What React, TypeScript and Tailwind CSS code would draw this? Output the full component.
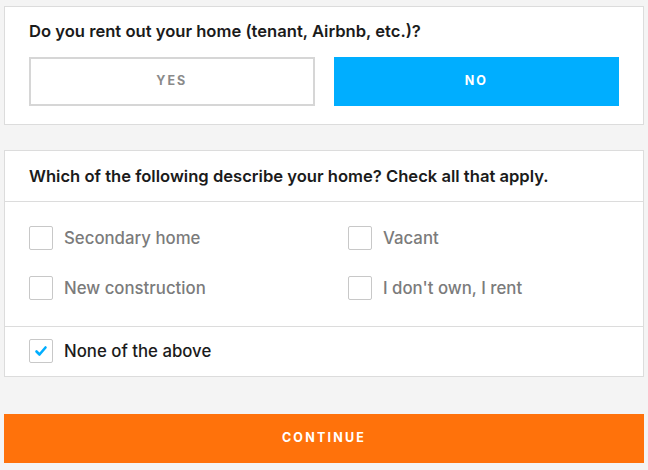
import { useState } from "react";

const options = [
  "Secondary home",
  "Vacant",
  "New construction",
  "I don't own, I rent",
];

function Checkbox({ checked }: { checked: boolean }) {
  return (
    <span className="flex h-6 w-6 shrink-0 items-center justify-center rounded-[2px] border border-[#c8c8c8] bg-white">
      {checked && (
        <svg width="14" height="14" viewBox="0 0 14 14" fill="none">
          <path
            d="M2.5 7.5 L5.5 10.5 L11.5 3.5"
            stroke="#00aeff"
            strokeWidth="2.6"
            strokeLinecap="round"
            strokeLinejoin="round"
          />
        </svg>
      )}
    </span>
  );
}

export default function App() {
  const [rents, setRents] = useState<"yes" | "no">("no");
  const [checked, setChecked] = useState<string[]>([]);
  const [none, setNone] = useState(true);

  const toggle = (item: string) => {
    setNone(false);
    setChecked((list) =>
      list.includes(item) ? list.filter((i) => i !== item) : [...list, item]
    );
  };

  return (
    <div className="min-h-[470px] bg-[#f4f4f4] px-[4px] pt-[6px] font-['Inter','Liberation_Sans',sans-serif]">
      <section className="border border-[#dcdcdc] bg-white px-6 pt-[12px] pb-[18px]">
        <h2 className="text-[16.6px] leading-6 font-semibold text-[#1b1b1b]">
          Do you rent out your home (tenant, Airbnb, etc.)?
        </h2>
        <div className="mt-[14px] grid grid-cols-2 gap-[19px]">
          <button
            onClick={() => setRents("yes")}
            className={
              rents === "yes"
                ? "h-[49px] bg-[#00aeff] text-[12.5px] font-bold tracking-[2px] text-white"
                : "h-[49px] border-2 border-[#d6d6d6] bg-white text-[12.5px] font-bold tracking-[2px] text-[#8a8a8a]"
            }
          >
            YES
          </button>
          <button
            onClick={() => setRents("no")}
            className={
              rents === "no"
                ? "h-[49px] bg-[#00aeff] text-[12.5px] font-bold tracking-[2px] text-white"
                : "h-[49px] border-2 border-[#d6d6d6] bg-white text-[12.5px] font-bold tracking-[2px] text-[#8a8a8a]"
            }
          >
            NO
          </button>
        </div>
      </section>

      <section className="mt-[25px] border border-[#dcdcdc] bg-white">
        <div className="flex h-[51px] items-center border-b border-[#dcdcdc] px-6">
          <h2 className="text-[16.6px] leading-6 font-semibold text-[#1b1b1b]">
            Which of the following describe your home? Check all that apply.
          </h2>
        </div>
        <div className="grid grid-cols-[319px_1fr] gap-y-[26px] border-b border-[#dcdcdc] px-6 pt-6 pb-[26px]">
          {options.map((item) => (
            <label
              key={item}
              onClick={() => toggle(item)}
              className="flex cursor-pointer items-center gap-[11px]"
            >
              <Checkbox checked={checked.includes(item)} />
              <span className="text-[16.8px] leading-6 font-medium text-[#7b7b7b]">
                {item}
              </span>
            </label>
          ))}
        </div>
        <div className="px-6 pt-3 pb-[13px]">
          <label
            onClick={() => {
              setNone(!none);
              setChecked([]);
            }}
            className="flex cursor-pointer items-center gap-[11px]"
          >
            <Checkbox checked={none} />
            <span className="text-[16.8px] leading-6 font-medium text-[#1b1b1b]">
              None of the above
            </span>
          </label>
        </div>
      </section>

      <button className="mt-[37px] flex h-[49px] w-full items-center justify-center bg-[#ff720b] text-[12.5px] font-bold tracking-[2.2px] text-white">
        CONTINUE
      </button>
    </div>
  );
}
